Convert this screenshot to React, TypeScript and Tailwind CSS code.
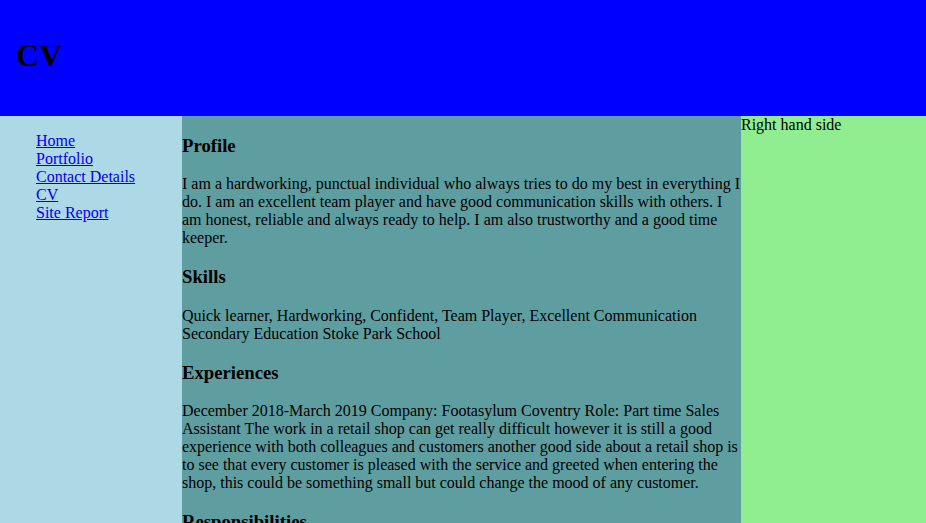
const links = ['Home', 'Portfolio', 'Contact Details', 'CV', 'Site Report'];

export default function App() {
  return (
    <div className="min-h-screen font-['Liberation_Serif',serif] text-base leading-normal text-black">
      <header className="h-[116px] bg-[#0000ff] pl-4 pt-[37px]">
        <h1 className="text-[32px] font-bold leading-[normal]">CV</h1>
      </header>
      <div className="flex">
        <nav className="w-[182px] shrink-0 bg-[#add8e6] pt-4 pl-[36px]">
          <ul className="leading-[normal]">
            {links.map((l) => (
              <li key={l}>
                <a href="#" className="text-[#0000ee] underline">
                  {l}
                </a>
              </li>
            ))}
          </ul>
        </nav>
        <main className="w-[559px] shrink-0 bg-[#5f9ea0] leading-[normal]">
          <h3 className="my-[18.72px] text-[18.72px] font-bold">Profile</h3>
          <p className="my-4">
            I am a hardworking, punctual individual who always tries to do my best in everything I do. I am an
            excellent team player and have good communication skills with others. I am honest, reliable and always
            ready to help. I am also trustworthy and a good time keeper.
          </p>
          <h3 className="my-[18.72px] text-[18.72px] font-bold">Skills</h3>
          <p className="my-4">
            Quick learner, Hardworking, Confident, Team Player, Excellent Communication
            <br />
            Secondary Education Stoke Park School
          </p>
          <h3 className="my-[18.72px] text-[18.72px] font-bold">Experiences</h3>
          <p className="my-4">
            December 2018-March 2019 Company: Footasylum Coventry Role: Part time Sales Assistant The work in a retail
            shop can get really difficult however it is still a good experience with both colleagues and customers
            another good side about a retail shop is to see that every customer is pleased with the service and
            greeted when entering the shop, this could be something small but could change the mood of any customer.
          </p>
          <h3 className="my-[18.72px] text-[18.72px] font-bold">Responsibilities</h3>
          <p className="my-4">
            Serving customers, dealing with stock, keeping the shop floor tidy and helping colleagues when needed.
          </p>
        </main>
        <aside className="flex-1 bg-[#90ee90] leading-[normal]">Right hand side</aside>
      </div>
    </div>
  );
}
